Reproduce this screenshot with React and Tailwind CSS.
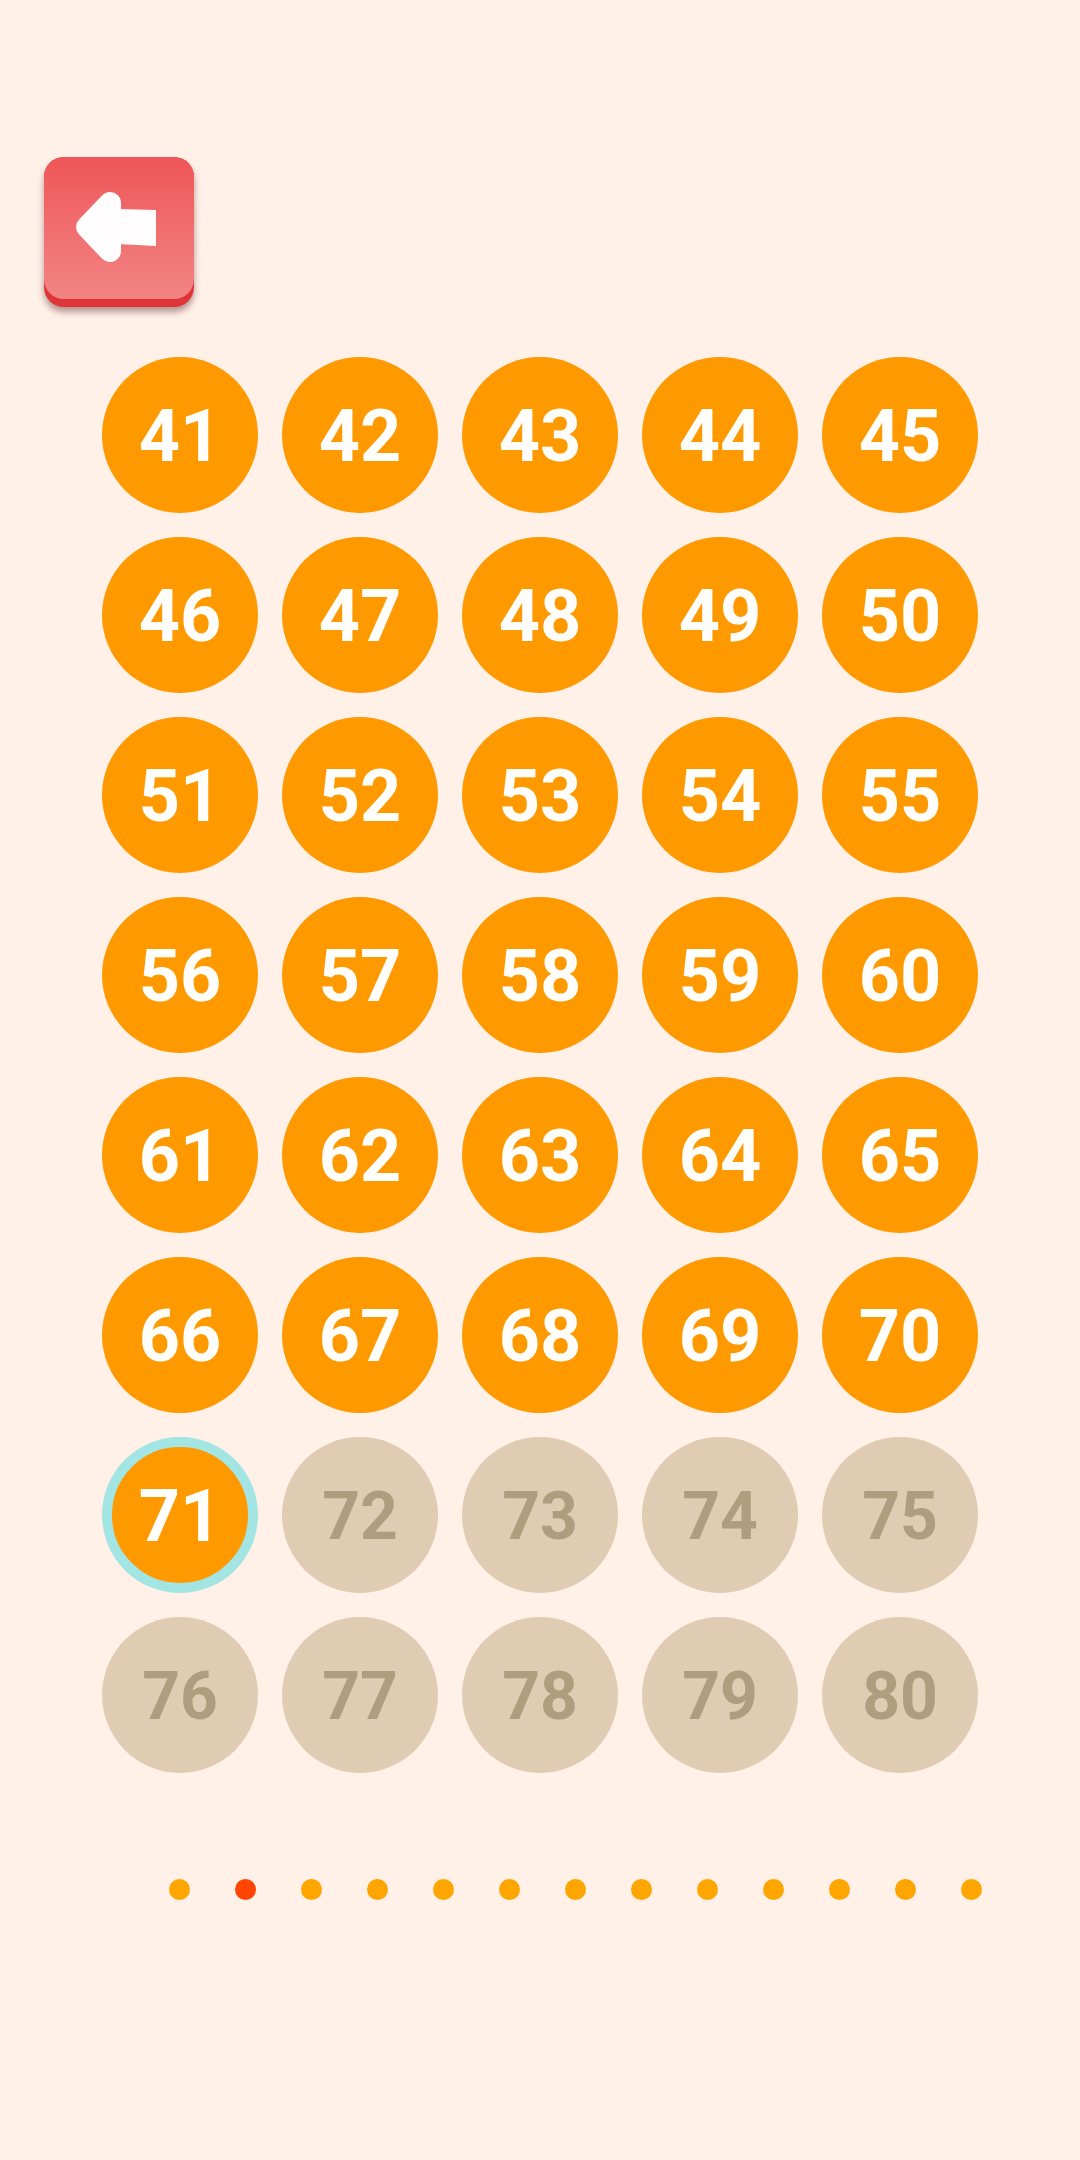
import React, { useState } from "react";

const FIRST_LEVEL = 41;
const PER_PAGE = 40;
const CURRENT_LEVEL = 71;
const PAGE_COUNT = 13;

const LEVELS = Array.from({ length: PER_PAGE }, (_, i) => FIRST_LEVEL + i);
const PAGES = Array.from({ length: PAGE_COUNT }, (_, i) => i + 1);

function BackButton() {
  return (
    <button
      type="button"
      aria-label="Back"
      className="block size-[150px] rounded-[20px] bg-[#df3438] pb-2 shadow-[0_5px_6px_rgba(90,40,40,0.45)]"
    >
      <span className="block h-full rounded-[20px] bg-linear-to-b from-[#ee5558] to-[#f28484]">
        <svg viewBox="0 0 150 142" className="block h-full w-full" fill="#fffdfd">
          <path
            d="M66 46 L66 94 L43 70 Z"
            stroke="#fffdfd"
            strokeWidth="22"
            strokeLinejoin="round"
          />
          <path d="M74 52 L112 53 L112 89 L74 87 Z" />
        </svg>
      </span>
    </button>
  );
}

function LevelButton({ level }) {
  const base = "flex aspect-square items-center justify-center rounded-full pt-1 font-bold leading-none";

  if (level > CURRENT_LEVEL) {
    return (
      <button type="button" disabled className={`${base} bg-[#dfccb3] text-[66px] text-[#b09c7e]`}>
        {level}
      </button>
    );
  }

  return (
    <button
      type="button"
      className={`${base} bg-[#ff9900] text-[72px] text-[#fffefa] ${
        level === CURRENT_LEVEL ? "border-10 border-[#a3e5e3]" : ""
      }`}
    >
      {level}
    </button>
  );
}

export default function App() {
  const [page, setPage] = useState(2);

  return (
    <main className="min-h-screen bg-[#fff0e8] pt-[157px] pb-24 font-['Roboto',sans-serif]">
      <header className="px-11">
        <BackButton />
      </header>

      <section className="mt-[50px] grid grid-cols-5 gap-6 px-[102px]">
        {LEVELS.map((level) => (
          <LevelButton key={level} level={level} />
        ))}
      </section>

      {/* Page dots */}
      <nav className="mt-[106px] flex justify-between pr-[98px] pl-[169px]">
        {PAGES.map((p) => (
          <button
            key={p}
            type="button"
            aria-label={`Page ${p}`}
            onClick={() => setPage(p)}
            className={`size-[21px] rounded-full ${p === page ? "bg-[#ff4500]" : "bg-[#ffa500]"}`}
          />
        ))}
      </nav>
    </main>
  );
}
